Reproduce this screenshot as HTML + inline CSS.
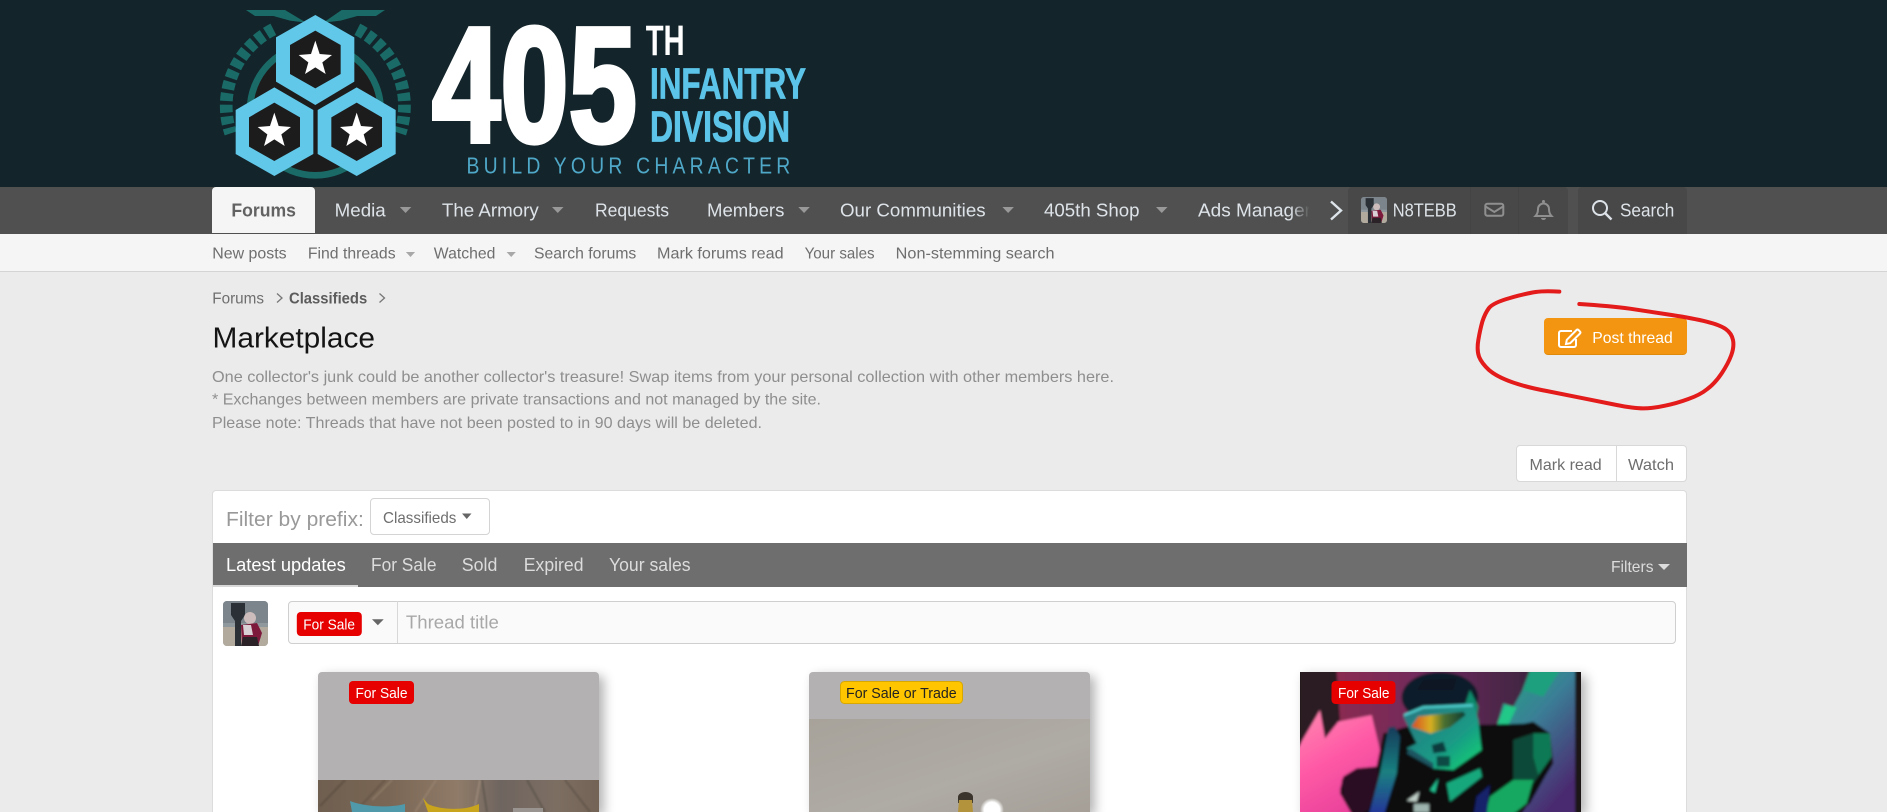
<!DOCTYPE html>
<html lang="en"><head><meta charset="utf-8"><title>Marketplace</title>
<style>
html,body{margin:0;padding:0;background:#ebebeb;width:1887px;height:812px;overflow:hidden;font-family:"Liberation Sans",sans-serif}
#page{position:relative;width:1887px;height:812px;overflow:hidden;background:#ebebeb}
.b{position:absolute;box-sizing:border-box}
svg{position:absolute;left:0;top:0;display:block}
text{font-family:"Liberation Sans",sans-serif}
.nav{font-size:18px;fill:#dde3e8}
.sub{font-size:15.6px;fill:#6e6e6e}
.desc{font-size:15.6px;fill:#8e8e8e}
.tab{font-size:18px;fill:#dcdcdc}
.lab{font-size:15px;fill:#fff}
</style></head><body>
<div id="page">
<div class="b" style="left:0;top:0;width:1887px;height:187px;background:#13242a"></div>
<div class="b" style="left:0;top:187px;width:1887px;height:47px;background:#505050"></div>
<div class="b" style="left:212px;top:187px;width:103px;height:46px;background:#f5f5f5;border-radius:4px 4px 0 0"></div>
<div class="b" style="left:1348px;top:187px;width:220px;height:47px;background:#484848;border-radius:4px 4px 0 0"></div>
<div class="b" style="left:1470px;top:187px;width:1px;height:47px;background:#444"></div>
<div class="b" style="left:1518px;top:187px;width:1px;height:47px;background:#444"></div>
<div class="b" style="left:1578px;top:187px;width:109px;height:47px;background:#484848;border-radius:4px 4px 0 0"></div>
<div class="b" style="left:0;top:234px;width:1887px;height:38px;background:#f5f5f5;border-bottom:1px solid #d4d4d4"></div>
<div class="b" style="left:1544px;top:318px;width:143px;height:37px;background:#f39510;border-radius:4px;border-bottom:1px solid #e08a0c"></div>
<div class="b" style="left:1516px;top:445px;width:171px;height:37px;background:#fff;border:1px solid #d8d8d8;border-radius:4px"></div>
<div class="b" style="left:1616px;top:445px;width:1px;height:37px;background:#d8d8d8"></div>
<div class="b" style="left:212px;top:490px;width:1475px;height:322px;background:#fff;border:1px solid #dcdcdc;border-bottom:0;border-radius:4px 4px 0 0"></div>
<div class="b" style="left:369.5px;top:498px;width:120px;height:37px;background:#fff;border:1px solid #d4d4d4;border-radius:4px"></div>
<div class="b" style="left:213px;top:543px;width:1474px;height:44px;background:#6e6e6e"></div>
<div class="b" style="left:213px;top:585px;width:145px;height:2px;background:#d8d8d8"></div>
<div class="b" style="left:288px;top:600.5px;width:1388px;height:43px;background:#fafafa;border:1px solid #cfcfcf;border-radius:4px"></div>
<div class="b" style="left:397px;top:601px;width:1px;height:42px;background:#d8d8d8"></div>
<div class="b" style="left:318px;top:672px;width:281px;height:140px;background:#b3b1b1;border-radius:4px 4px 0 0;box-shadow:5px 4px 11px rgba(0,0,0,.3)"></div>
<div class="b" style="left:809px;top:672px;width:281px;height:140px;background:#b3b1b2;border-radius:4px 4px 0 0;box-shadow:5px 4px 11px rgba(0,0,0,.3)"></div>
<div class="b" style="left:1300px;top:672px;width:281px;height:140px;background:#1a1216;box-shadow:5px 4px 11px rgba(0,0,0,.3)"></div>

<svg width="1887" height="812" viewBox="0 0 1887 812" xmlns="http://www.w3.org/2000/svg">
<defs>
<symbol id="av" viewBox="0 0 45 45">
<rect width="45" height="45" fill="#8f989c"/>
<rect y="0" width="45" height="22" fill="#7b858b"/>
<rect y="26" width="45" height="19" fill="#b3aa9e"/>
<path d="M8 2h14v12l-4 6v25h-6V20L8 14z" fill="#2a3035"/>
<circle cx="27" cy="17" r="6" fill="#cdbcbc"/>
<path d="M18 24l16-2 5 10-4 13H19z" fill="#7d1a3c"/>
<path d="M20 24l8 0 2 10-9 0z" fill="#d8d0d4"/>
<path d="M20 36h14l2 9H18z" fill="#2b2228"/>
</symbol>
<linearGradient id="gwall" x1="0" y1="0" x2="1" y2="0"><stop offset="0" stop-color="#8a2a50"/><stop offset=".5" stop-color="#6d2a5e"/><stop offset="1" stop-color="#3e2440"/></linearGradient>
<linearGradient id="gpink" x1="0" y1="0" x2=".5" y2="1"><stop offset="0" stop-color="#ff8ab0"/><stop offset=".5" stop-color="#ff5aa6"/><stop offset="1" stop-color="#e8409a"/></linearGradient>
<linearGradient id="gright" x1="0" y1="0" x2=".6" y2="1"><stop offset="0" stop-color="#1fa880"/><stop offset=".45" stop-color="#3a7f96"/><stop offset="1" stop-color="#4a2a70"/></linearGradient>
<linearGradient id="gface" x1="0" y1="0" x2="1" y2="1"><stop offset="0" stop-color="#2a7480"/><stop offset=".6" stop-color="#1a9a86"/><stop offset="1" stop-color="#10d870"/></linearGradient>
<linearGradient id="gvis" x1="0" y1="0" x2="1" y2="0"><stop offset="0" stop-color="#d84a20"/><stop offset=".35" stop-color="#d8b020"/><stop offset=".6" stop-color="#4a7030"/><stop offset="1" stop-color="#0e3a30"/></linearGradient>
<linearGradient id="ggun" x1="0" y1="0" x2="0" y2="1"><stop offset="0" stop-color="#123a5a"/><stop offset=".5" stop-color="#1a8080"/><stop offset="1" stop-color="#26309a"/></linearGradient>
<linearGradient id="gwood" x1="0" y1="0" x2="1" y2="0"><stop offset="0" stop-color="#6f5f50"/><stop offset=".25" stop-color="#7a6654"/><stop offset=".5" stop-color="#8f7b68"/><stop offset=".65" stop-color="#6f6560"/><stop offset=".85" stop-color="#7d6e62"/><stop offset="1" stop-color="#736356"/></linearGradient>
<linearGradient id="gpic" x1="0" y1="0" x2="1" y2="1"><stop offset="0" stop-color="#a7a29a"/><stop offset=".6" stop-color="#afaba5"/><stop offset="1" stop-color="#a59f97"/></linearGradient>
<radialGradient id="gglow"><stop offset="0" stop-color="#fff"/><stop offset=".65" stop-color="#fff"/><stop offset="1" stop-color="#fff" stop-opacity="0"/></radialGradient>
<linearGradient id="fade" x1="0" y1="0" x2="1" y2="0"><stop offset="0" stop-color="#505050" stop-opacity="0"/><stop offset="1" stop-color="#505050"/></linearGradient>
<filter id="bl" x="-5%" y="-5%" width="110%" height="110%"><feGaussianBlur stdDeviation="4"/></filter>
<filter id="bw"><feGaussianBlur stdDeviation=".9"/></filter>
<clipPath id="c3"><rect x="0" y="6" width="843" height="426"/></clipPath>
<clipPath id="c1"><rect x="318" y="780" width="281" height="32"/></clipPath>
<clipPath id="r45"><rect x="223" y="601" width="45" height="45" rx="4"/></clipPath>
<clipPath id="r26"><rect x="1361" y="197" width="26" height="26" rx="3"/></clipPath>
</defs>

<!-- logo -->
<g transform="translate(210 0) scale(.33333)">
<g fill="#1a6b68">
<path d="M108 30H225L288 68 240 62 190 48H135z"/>
<path d="M525 30H395L340 68 392 62 442 48H498z"/>
</g>
<g fill="none" stroke="#1a6b68" stroke-width="38">
<path d="M190 88A258 258 0 0 0 62 400" stroke-dasharray="24 11"/>
<path d="M442 88A258 258 0 0 1 570 400" stroke-dasharray="24 11"/>
</g>
<circle cx="316" cy="330" r="196" fill="#1c1c1c" stroke="#1a6b68" stroke-width="20"/>
<g fill="#62c8ea">
<path d="M316 45L433 112V245L316 315 198 245V112z"/>
<path d="M193 262L310 330V462L193 528 77 462V330z"/>
<path d="M440 262L557 330V462L440 528 323 462V330z"/>
</g>
<g fill="#1c1c1c">
<path d="M316 92L392 135V222L316 265 240 222V135z"/>
<path d="M193 308L270 352V440L193 483 117 440V352z"/>
<path d="M440 308L516 352V440L440 483 364 440V352z"/>
</g>
<g fill="#fff">
<path d="M316 122L329 162 366 165 337 187 347 222 316 202 285 222 295 187 266 165 303 162z"/>
<path d="M193 338L206 378 243 381 214 403 224 438 193 418 162 438 172 403 143 381 180 378z"/>
<path d="M440 338L453 378 490 381 461 403 471 438 440 418 409 438 419 403 390 381 427 378z"/>
</g>
</g>
<text x="432" y="141.5" font-size="164" font-weight="700" fill="#fff" stroke="#fff" stroke-width="5" textLength="205" lengthAdjust="spacingAndGlyphs">405</text>
<text x="645.7" y="55" font-size="42.5" font-weight="700" fill="#fff" textLength="39" lengthAdjust="spacingAndGlyphs">TH</text>
<text x="650" y="98.3" font-size="43.5" font-weight="700" fill="#5cc4e8" stroke="#5cc4e8" stroke-width=".8" textLength="156" lengthAdjust="spacingAndGlyphs">INFANTRY</text>
<text x="650" y="141.7" font-size="43.5" font-weight="700" fill="#5cc4e8" stroke="#5cc4e8" stroke-width=".8" textLength="140" lengthAdjust="spacingAndGlyphs">DIVISION</text>
<text x="466.5" y="173.3" font-size="23" fill="#4fa8c8" letter-spacing="5" textLength="328" lengthAdjust="spacingAndGlyphs">BUILD YOUR CHARACTER</text>

<!-- nav -->
<text x="231.4" y="216.7" font-size="18" font-weight="700" fill="#626262" textLength="64.6" lengthAdjust="spacingAndGlyphs">Forums</text>
<text class="nav" x="334.7" y="216.7" textLength="51" lengthAdjust="spacingAndGlyphs">Media</text>
<text class="nav" x="441.9" y="216.7" textLength="96.8" lengthAdjust="spacingAndGlyphs">The Armory</text>
<text class="nav" x="595" y="216.7" textLength="74" lengthAdjust="spacingAndGlyphs">Requests</text>
<text class="nav" x="707" y="216.7" textLength="77.4" lengthAdjust="spacingAndGlyphs">Members</text>
<text class="nav" x="840" y="216.7" textLength="145.6" lengthAdjust="spacingAndGlyphs">Our Communities</text>
<text class="nav" x="1044" y="216.7" textLength="95.5" lengthAdjust="spacingAndGlyphs">405th Shop</text>
<text class="nav" x="1198" y="216.7" textLength="113" lengthAdjust="spacingAndGlyphs">Ads Manager</text>
<rect x="1290" y="190" width="20" height="40" fill="url(#fade)"/>
<rect x="1309" y="190" width="10" height="40" fill="#505050"/>
<g fill="#999">
<path d="M399.8 207h11.5l-5.75 6z"/><path d="M552 207h11.5l-5.75 6z"/><path d="M798.3 207h11.5l-5.75 6z"/><path d="M1002.4 207h11.5l-5.75 6z"/><path d="M1156 207h11.5l-5.75 6z"/>
</g>
<path d="M1331 201.5L1341 210.5 1331 219.5" fill="none" stroke="#dde4ea" stroke-width="2.4"/>
<g clip-path="url(#r26)"><use href="#av" x="1361" y="197" width="26" height="26"/></g>
<text class="nav" x="1392.7" y="216.7" textLength="64" lengthAdjust="spacingAndGlyphs">N8TEBB</text>
<g fill="none" stroke="#8f8f8f" stroke-width="2">
<rect x="1485.3" y="203.7" width="18" height="12" rx="2"/>
<path d="M1485.5 206.5L1494.3 212 1503 206.5"/>
<path d="M1543.5 203.5a5.5 5.5 0 0 1 5.5 5.5c0 4 1 5.5 2.5 7h-16c1.5-1.5 2.5-3 2.5-7a5.5 5.5 0 0 1 5.5-5.5z"/>
</g>
<circle cx="1543.5" cy="201.5" r="1.5" fill="#8f8f8f"/><path d="M1541 218h5a2.5 2 0 0 1-5 0z" fill="#8f8f8f"/>
<circle cx="1600" cy="208" r="7" fill="none" stroke="#dde3e8" stroke-width="2"/>
<path d="M1605 213L1611.5 219.5" stroke="#dde3e8" stroke-width="2.4"/>
<text class="nav" x="1620" y="216.7" textLength="54.3" lengthAdjust="spacingAndGlyphs">Search</text>

<!-- subnav -->
<text class="sub" x="212.3" y="258.7" textLength="74.3" lengthAdjust="spacingAndGlyphs">New posts</text>
<text class="sub" x="307.9" y="258.7" textLength="87.7" lengthAdjust="spacingAndGlyphs">Find threads</text>
<text class="sub" x="433.8" y="258.7" textLength="61.6" lengthAdjust="spacingAndGlyphs">Watched</text>
<text class="sub" x="534" y="258.7" textLength="102.3" lengthAdjust="spacingAndGlyphs">Search forums</text>
<text class="sub" x="657" y="258.7" textLength="126.6" lengthAdjust="spacingAndGlyphs">Mark forums read</text>
<text class="sub" x="804.6" y="258.7" textLength="70" lengthAdjust="spacingAndGlyphs">Your sales</text>
<text class="sub" x="895.7" y="258.7" textLength="158.8" lengthAdjust="spacingAndGlyphs">Non-stemming search</text>
<g fill="#a8a8a8"><path d="M405.9 252h9.2l-4.6 5z"/><path d="M506.6 252h9.2l-4.6 5z"/></g>

<!-- breadcrumb -->
<text class="sub" x="212.3" y="303.7" fill="#6a6a6a" textLength="51.7" lengthAdjust="spacingAndGlyphs">Forums</text>
<text x="289" y="303.7" font-size="15.6" font-weight="700" fill="#5c5c5c" textLength="78.2" lengthAdjust="spacingAndGlyphs">Classifieds</text>
<g fill="none" stroke="#777" stroke-width="1.3"><path d="M277 293.5L282 298 277 302.5"/><path d="M379.5 293.5L384.5 298 379.5 302.5"/></g>

<!-- title -->
<text x="212.5" y="347.7" font-size="28.8" fill="#141414" textLength="162.5" lengthAdjust="spacingAndGlyphs">Marketplace</text>
<text class="desc" x="212" y="382" textLength="902" lengthAdjust="spacingAndGlyphs">One collector's junk could be another collector's treasure! Swap items from your personal collection with other members here.</text>
<text class="desc" x="212" y="404.5" textLength="609" lengthAdjust="spacingAndGlyphs">* Exchanges between members are private transactions and not managed by the site.</text>
<text class="desc" x="212" y="428" textLength="550" lengthAdjust="spacingAndGlyphs">Please note: Threads that have not been posted to in 90 days will be deleted.</text>

<!-- post thread -->
<g fill="none" stroke="#fff" stroke-width="2">
<path d="M1572 331H1561a2 2 0 0 0-2 2V345a2 2 0 0 0 2 2H1574a2 2 0 0 0 2-2V339"/>
<path d="M1566 344l.8-4.2L1576.5 330a1.5 1.5 0 0 1 2 0l1.5 1.5a1.5 1.5 0 0 1 0 2L1570.2 343.2z"/>
</g>
<text x="1592.3" y="342.8" font-size="15.6" fill="#fff" textLength="80.4" lengthAdjust="spacingAndGlyphs">Post thread</text>

<text class="sub" x="1529.5" y="470" textLength="72.2" lengthAdjust="spacingAndGlyphs">Mark read</text>
<text class="sub" x="1628" y="470" textLength="46" lengthAdjust="spacingAndGlyphs">Watch</text>

<!-- filter row -->
<text x="226" y="526" font-size="20" fill="#999" textLength="137.8" lengthAdjust="spacingAndGlyphs">Filter by prefix:</text>
<text class="sub" x="383" y="523" textLength="73.4" lengthAdjust="spacingAndGlyphs">Classifieds</text>
<path d="M462 513.5h9.5l-4.75 5.5z" fill="#666"/>

<!-- tabs -->
<text class="tab" x="226" y="571" style="fill:#fff" textLength="119.8" lengthAdjust="spacingAndGlyphs">Latest updates</text>
<text class="tab" x="371" y="571" textLength="65.5" lengthAdjust="spacingAndGlyphs">For Sale</text>
<text class="tab" x="461.8" y="571" textLength="35.6" lengthAdjust="spacingAndGlyphs">Sold</text>
<text class="tab" x="523.8" y="571" textLength="59.7" lengthAdjust="spacingAndGlyphs">Expired</text>
<text class="tab" x="609" y="571" textLength="81.6" lengthAdjust="spacingAndGlyphs">Your sales</text>
<text x="1611" y="572" font-size="15.6" fill="#dcdcdc" textLength="42.5" lengthAdjust="spacingAndGlyphs">Filters</text>
<path d="M1658 564h12l-6 6z" fill="#dcdcdc"/>

<!-- quick thread -->
<g clip-path="url(#r45)"><use href="#av" x="223" y="601" width="45" height="45"/></g>
<rect x="296.8" y="612" width="65" height="24" rx="4" fill="#e60000"/>
<text class="lab" x="303.3" y="629.3" textLength="51.7" lengthAdjust="spacingAndGlyphs">For Sale</text>
<path d="M372 619.3h11.7l-5.85 6z" fill="#666"/>
<text x="405.9" y="628.3" font-size="18" fill="#a8a8a8" textLength="93" lengthAdjust="spacingAndGlyphs">Thread title</text>

<!-- card 1 -->
<g clip-path="url(#c1)">
<rect x="318" y="780" width="281" height="32" fill="url(#gwood)"/>
<g stroke-width="2.5" fill="none" opacity=".4" filter="url(#bw)">
<path d="M345 780L320 806" stroke="#4e4238"/><path d="M385 780L355 812" stroke="#5a4a3c"/><path d="M392 780L372 800" stroke="#9a8874"/><path d="M436 780L415 812" stroke="#a08c78"/><path d="M480 780L474 812" stroke="#b09c88"/><path d="M482 780L487 812" stroke="#4e4840"/><path d="M527 780L545 812" stroke="#4e4840"/><path d="M565 780L590 812" stroke="#54483e"/>
</g>
<path d="M350 801C365 807 390 808 405 804V812H352z" fill="#4f99aa"/>
<path d="M423 798L428 804C440 810 465 811 479 804V812H428z" fill="#c9a41d"/>
<rect x="513" y="808" width="30" height="4" fill="#9a9490"/>
</g>
<rect x="349" y="681" width="65" height="23" rx="4" fill="#e60000"/>
<text class="lab" x="355.5" y="698" textLength="52" lengthAdjust="spacingAndGlyphs">For Sale</text>

<!-- card 2 -->
<rect x="809" y="719" width="281" height="93" fill="url(#gpic)"/>
<circle cx="992" cy="810" r="12" fill="url(#gglow)"/>
<path d="M958 797a7.5 5 0 0 1 15 0v6h-15z" fill="#3a342c"/>
<path d="M959 800h13l1 12h-15z" fill="#b3933c"/>
<rect x="840.5" y="681.5" width="122" height="22" rx="4" fill="#ffc600" stroke="#d8a800"/>
<text class="lab" style="fill:#222" x="846" y="698" textLength="110.7" lengthAdjust="spacingAndGlyphs">For Sale or Trade</text>

<!-- card 3 image -->
<g transform="translate(1300 670) scale(.33333)" clip-path="url(#c3)">
<rect x="0" y="0" width="845" height="432" fill="#1c1418"/>
<g filter="url(#bl)">
<rect x="0" y="0" width="845" height="432" fill="#1c1418"/>
<path d="M0 0H112L118 150 75 205 60 120 0 240z" fill="#2b1d20"/>
<path d="M110 0H690L665 65 640 110 610 100 590 170 500 200 300 180 240 240 215 135 120 155z" fill="url(#gwall)"/>
<path d="M-10 240L60 120 75 205 115 155 215 135 240 240 270 175 240 290 130 320 120 370 160 440H-10z" fill="url(#gpink)"/>
<path d="M690 0H825V440H660L760 280 750 190 700 155 650 165 590 170 610 100 640 110 665 65z" fill="url(#gright)"/>
<path d="M590 168L615 105 650 112 625 165z" fill="#20c888"/>
<path d="M690 0H780L730 80 670 60z" fill="#1fa07e"/>
<rect x="825" y="0" width="30" height="440" fill="#1a1216"/>
<path d="M250 190L320 170 700 160 750 190 752 290 690 400 640 440H170L120 360 130 320 170 295 230 290z" fill="#090910"/>
<path d="M125 330L170 295 232 295 240 330 205 420 170 440 130 380z" fill="#2a1022"/>
<ellipse cx="420" cy="82" rx="115" ry="76" fill="#0f1f2a"/>
<path d="M510 60L535 110 530 140 490 120z" fill="#0e8a6c"/>
<path d="M350 60L370 30 470 25 460 60z" fill="#0a1620"/>
<path d="M310 140L370 110 520 100 535 150 540 200 545 240 460 300 400 295 320 235 350 220z" fill="url(#gface)"/>
<path d="M335 170L355 140 490 125 497 135 450 172 392 190z" fill="url(#gvis)"/>
<path d="M312 136L370 112 518 106" fill="none" stroke="#50d0d0" stroke-width="7"/>
<path d="M395 225L430 215 440 245 400 250z" fill="#0a3a3c"/>
<path d="M410 258H450V290H410z" fill="#0a4a44"/>
<path d="M330 235L400 280 400 295 320 250z" fill="#1a5560"/>
<path d="M265 172L285 170 300 200 290 310 250 440H205L240 310z" fill="url(#ggun)"/>
<path d="M440 340L540 295 546 320 450 395z" fill="#16a87c"/>
<path d="M390 360L415 325 405 368z" fill="#20c090"/>
<path d="M640 210L700 190 750 190 755 260 700 340 640 330z" fill="#0a4a38"/>
<path d="M700 190L750 190 755 260 715 315 700 260z" fill="#0e7a54"/>
<path d="M570 380L640 330 700 330 680 400 630 440H555z" fill="#18a860"/>
<path d="M530 380L570 345 560 440H520z" fill="#12206a"/>
<path d="M320 392L358 365 350 395z" fill="#c0d0c8"/>
<rect x="342" y="402" width="45" height="25" fill="#9fb4ae"/>
</g>
</g>
<rect x="1331.5" y="681" width="64" height="23" rx="4" fill="#e60000"/>
<text class="lab" x="1338" y="698" textLength="51.5" lengthAdjust="spacingAndGlyphs">For Sale</text>

<!-- annotation -->
<g transform="translate(1300 180) scale(.33333)">
<path d="M778 335Q735 332 707 336Q680 340 630 354Q580 368 567 384Q555 400 547 425Q540 450 535 480Q530 510 537 530Q545 550 567 570Q590 590 635 606Q680 622 740 633Q800 645 850 655Q900 665 950 675Q1000 685 1030 685Q1060 685 1095 677Q1130 670 1165 657Q1200 645 1222 627Q1245 610 1265 580Q1285 550 1294 525Q1303 500 1299 480Q1295 460 1277 447Q1260 435 1220 425Q1180 415 1115 405Q1050 395 990 386Q930 378 838 372" fill="none" stroke="#e31b1b" stroke-width="12" stroke-linecap="round"/>
</g>
</svg>
</div>
</body></html>
